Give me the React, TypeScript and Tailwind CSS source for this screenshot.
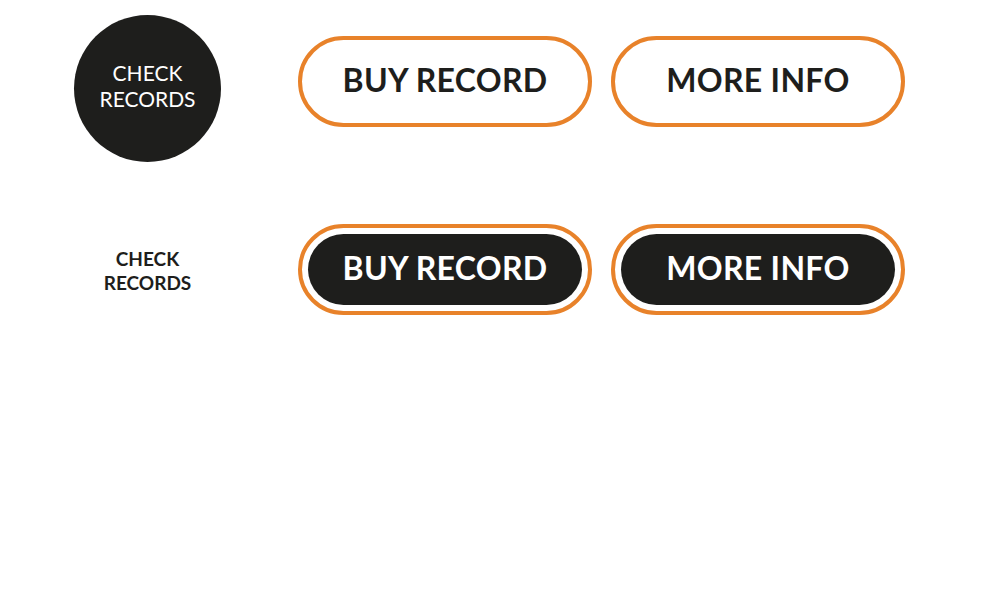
import React from "react"

const font = { fontFamily: "Lato, 'Open Sans', sans-serif" }

const OutlineButton = ({ label }: { label: string }) => (
  <button className="flex h-[91px] w-[294px] items-center justify-center rounded-full border-4 border-[#e8822a] bg-white pb-[3px] text-[32px] font-bold tracking-[0.3px] text-[#1e1e1c]">
    {label}
  </button>
)

const FilledButton = ({ label }: { label: string }) => (
  <button className="flex h-[91px] w-[294px] rounded-full border-4 border-[#e8822a] bg-white p-[6px]">
    <span className="flex flex-1 items-center justify-center rounded-full bg-[#1e1e1c] pb-[3px] text-[32px] font-bold tracking-[0.3px] text-white">
      {label}
    </span>
  </button>
)

export default function App() {
  return (
    <div className="h-[600px] w-[1000px] bg-white" style={font}>
      {/* Row 1 */}
      <div className="flex items-start pt-[15px]">
        <div className="ml-[74px] flex h-[147px] w-[147px] flex-col items-center justify-center rounded-full bg-[#1e1e1c] pb-[6px] text-center text-[21px] leading-[26px] text-white">
          <span>CHECK</span>
          <span>RECORDS</span>
        </div>
        <div className="ml-[77px] mt-[21px] flex gap-[19px]">
          <OutlineButton label="BUY RECORD" />
          <OutlineButton label="MORE INFO" />
        </div>
      </div>

      {/* Row 2 */}
      <div className="mt-[62px] flex items-center">
        <div className="ml-[74px] flex w-[147px] flex-col items-center pt-[2px] text-center text-[19px] font-bold leading-[24px] text-[#1e1e1c]">
          <span>CHECK</span>
          <span>RECORDS</span>
        </div>
        <div className="ml-[77px] flex gap-[19px]">
          <FilledButton label="BUY RECORD" />
          <FilledButton label="MORE INFO" />
        </div>
      </div>
    </div>
  )
}
